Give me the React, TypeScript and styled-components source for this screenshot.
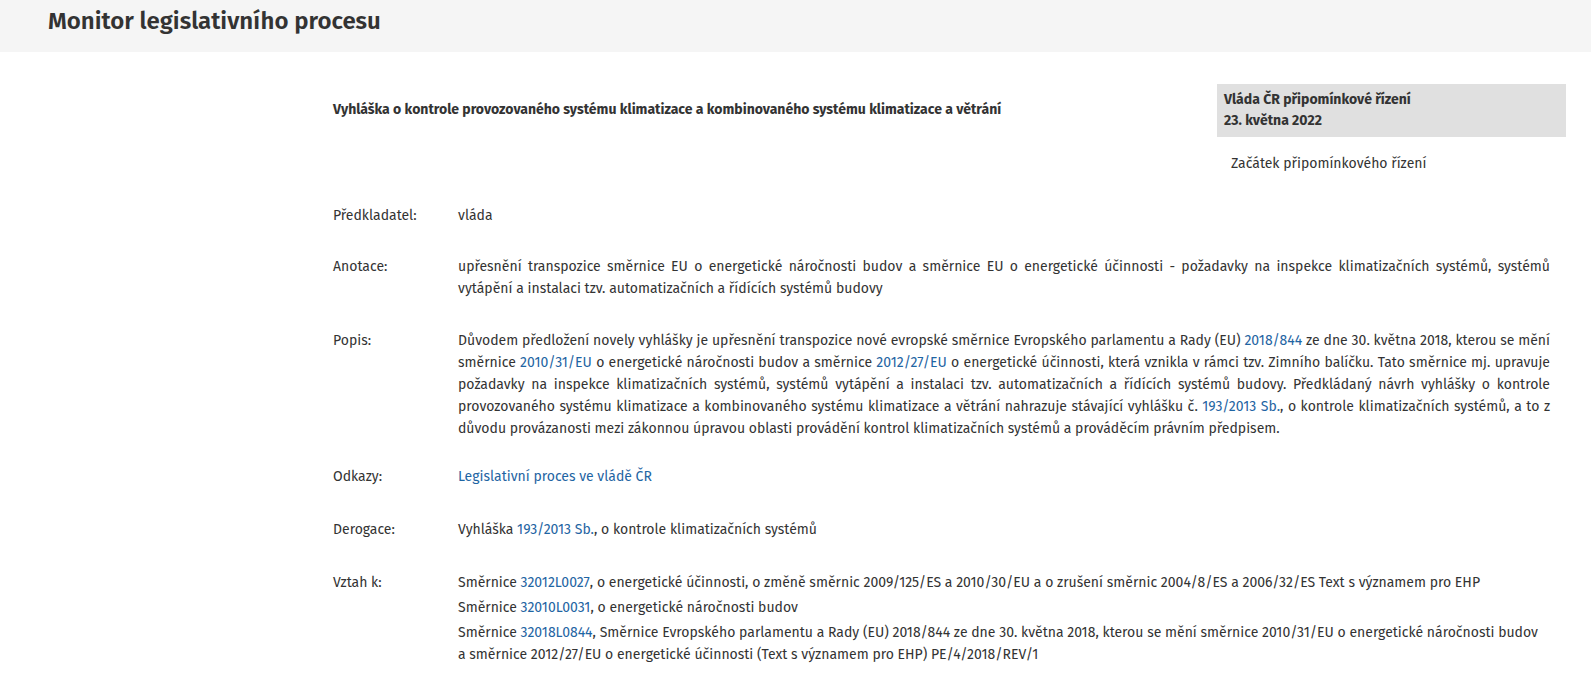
import styled, { createGlobalStyle } from "styled-components";

const GlobalStyle = createGlobalStyle`
	body {
		margin: 0;
		background: #fff;
		color: #333;
		font-family: "Fira Sans", Roboto, "Liberation Sans", sans-serif;
		font-size: 14px;
		line-height: 22px;
	}
	a {
		color: #1f65a3;
		text-decoration: none;
	}
`;

const Header = styled.header`
	box-sizing: border-box;
	height: 52px;
	padding: 6px 0 0 48px;
	background: #f5f5f5;
`;

const PageTitle = styled.h1`
	margin: 0;
	font-size: 24px;
	font-weight: 600;
	line-height: 30px;
	color: #333;
`;

const Main = styled.main`
	padding: 32px 25px 40px 333px;
`;

const Top = styled.div`
	display: flex;
	align-items: flex-start;
`;

const ActTitle = styled.h2`
	flex: 1;
	margin: 15px 0 0;
	font-size: 14px;
	font-weight: 700;
	line-height: 22px;
`;

const Side = styled.aside`
	width: 349px;
	flex-shrink: 0;
`;

const StageBox = styled.div`
	background: #e0e0e0;
	padding: 5px 7px 6px;
	font-weight: 700;
	line-height: 21px;
`;

const StageNote = styled.div`
	padding: 16px 14px 0;
`;

const Details = styled.dl`
	margin: 0 16px 0 0;
`;

const Row = styled.div<{ $space: number }>`
	display: grid;
	grid-template-columns: 125px 1fr;
	margin-top: ${props => props.$space}px;
`;

const Label = styled.dt`
	margin: 0;
`;

const Value = styled.dd<{ $justify?: boolean }>`
	margin: 0;
	text-align: ${props => (props.$justify ? "justify" : "left")};
`;

const RelList = styled.ul`
	list-style: none;
	margin: 0;
	padding: 0 12px 0 0;
	li + li {
		margin-top: 3px;
	}
`;

export default function App() {
	return (
		<>
			<GlobalStyle />
			<Header>
				<PageTitle>Monitor legislativního procesu</PageTitle>
			</Header>
			<Main>
				<Top>
					<ActTitle>
						Vyhláška o kontrole provozovaného systému klimatizace a kombinovaného systému klimatizace a větrání
					</ActTitle>
					<Side>
						<StageBox>
							<div>Vláda ČR připomínkové řízení</div>
							<div>23. května 2022</div>
						</StageBox>
						<StageNote>Začátek připomínkového řízení</StageNote>
					</Side>
				</Top>
				<Details>
					<Row $space={30}>
						<Label>Předkladatel:</Label>
						<Value>vláda</Value>
					</Row>

					<Row $space={29}>
						<Label>Anotace:</Label>
						<Value $justify>
							upřesnění transpozice směrnice EU o energetické náročnosti budov a směrnice EU o energetické účinnosti -
							požadavky na inspekce klimatizačních systémů, systémů vytápění a instalaci tzv. automatizačních a
							řídících systémů budovy
						</Value>
					</Row>

					<Row $space={30}>
						<Label>Popis:</Label>
						<Value $justify>
							Důvodem předložení novely vyhlášky je upřesnění transpozice nové evropské směrnice Evropského parlamentu
							a Rady (EU) <a href="#">2018/844</a> ze dne 30. května 2018, kterou se mění směrnice{" "}
							<a href="#">2010/31/EU</a> o energetické náročnosti budov a směrnice <a href="#">2012/27/EU</a> o
							energetické účinnosti, která vznikla v rámci tzv. Zimního balíčku. Tato směrnice mj. upravuje požadavky
							na inspekce klimatizačních systémů, systémů vytápění a instalaci tzv. automatizačních a řídících systémů
							budovy. Předkládaný návrh vyhlášky o kontrole provozovaného systému klimatizace a kombinovaného systému
							klimatizace a větrání nahrazuje stávající vyhlášku č. <a href="#">193/2013 Sb.</a>, o kontrole
							klimatizačních systémů, a to z důvodu provázanosti mezi zákonnou úpravou oblasti provádění kontrol
							klimatizačních systémů a prováděcím právním předpisem.
						</Value>
					</Row>

					<Row $space={26}>
						<Label>Odkazy:</Label>
						<Value>
							<a href="#">Legislativní proces ve vládě ČR</a>
						</Value>
					</Row>

					<Row $space={31}>
						<Label>Derogace:</Label>
						<Value>
							Vyhláška <a href="#">193/2013 Sb.</a>, o kontrole klimatizačních systémů
						</Value>
					</Row>

					<Row $space={31}>
						<Label>Vztah k:</Label>
						<Value>
							<RelList>
								<li>
									Směrnice <a href="#">32012L0027</a>, o energetické účinnosti, o změně směrnic 2009/125/ES a
									2010/30/EU a o zrušení směrnic 2004/8/ES a 2006/32/ES Text s významem pro EHP
								</li>
								<li>
									Směrnice <a href="#">32010L0031</a>, o energetické náročnosti budov
								</li>
								<li>
									Směrnice <a href="#">32018L0844</a>, Směrnice Evropského parlamentu a Rady (EU) 2018/844 ze dne
									30. května 2018, kterou se mění směrnice 2010/31/EU o energetické náročnosti budov a směrnice
									2012/27/EU o energetické účinnosti (Text s významem pro EHP) PE/4/2018/REV/1
								</li>
							</RelList>
						</Value>
					</Row>
				</Details>
			</Main>
		</>
	);
}
